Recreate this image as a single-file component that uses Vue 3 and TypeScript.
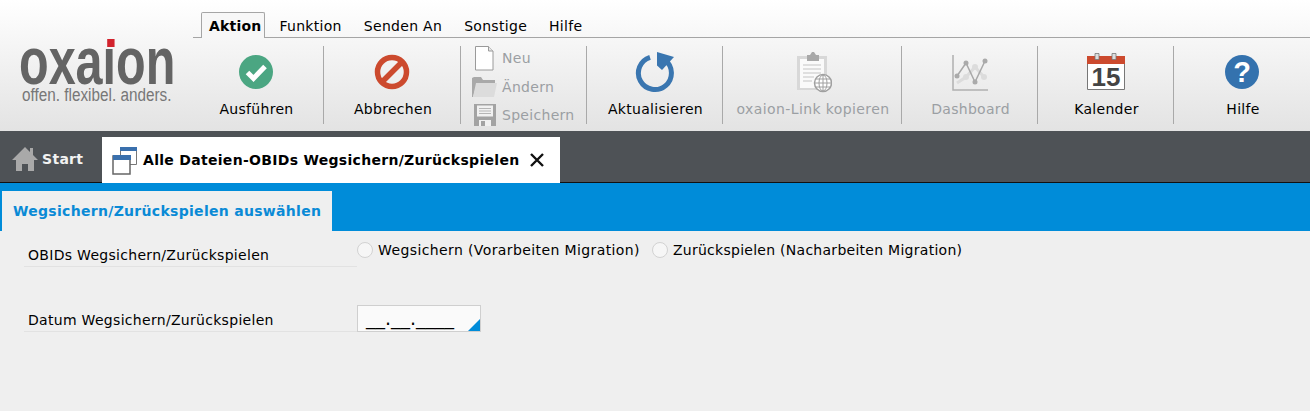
<script setup lang="ts">
const menu: string[] = ['Funktion', 'Senden An', 'Sonstige', 'Hilfe']
</script>

<template>
  <div class="page">
    <header class="head">
      <div class="logo">
        <div class="logo-mark"><span>oxa</span><span class="i-wrap"><span class="i">i</span></span><span>on</span></div>
        <div class="logo-sub">offen. flexibel. anders.</div>
      </div>
      <div class="ribbon">
        <nav class="menu">
          <span class="menu-tab active">Aktion</span>
          <span v-for="m in menu" :key="m" class="menu-tab">{{ m }}</span>
        </nav>
        <div class="tools">
          <div class="tool">
            <svg width="36" height="36" viewBox="0 0 36 36"><circle cx="18" cy="18" r="17" fill="#4ba682"/><path d="M9.500 18.500l6 6L27 12.500" fill="none" stroke="#fff" stroke-width="5"/></svg>
            <span>Ausführen</span>
          </div>
          <div class="tool second">
            <svg width="36" height="36" viewBox="0 0 36 36"><circle cx="18" cy="18" r="14.500" fill="none" stroke="#cc4a2e" stroke-width="5.500"/><path d="M8 28L28 8" stroke="#cc4a2e" stroke-width="5.500"/></svg>
            <span>Abbrechen</span>
          </div>
          <div class="tool small">
            <div class="row">
              <svg width="26" height="26" viewBox="0 0 26 26"><path d="M4.500 1.500h13l4.500 4.500v19H4.500z" fill="#fff" stroke="#9a9a9a"/><path d="M17.500 1.500v4.500h4.500" fill="#e6e6e6" stroke="#9a9a9a"/></svg>
              <span>Neu</span>
            </div>
            <div class="row">
              <svg width="26" height="26" viewBox="0 0 26 26"><path d="M1 4l2-1h7l2 3h12v3H6L2 23H1z" fill="#a9a9a9"/><path d="M5 9h21l-3 14H2z" fill="#dcdcdc"/></svg>
              <span>Ändern</span>
            </div>
            <div class="row">
              <svg width="26" height="26" viewBox="0 0 26 26"><path d="M3 2h22v22H3z" fill="#a3a3a3"/><path d="M6 3.500h16v11H6z" fill="#f1f1f1"/><path d="M8 6.500h12M8 9h12M8 11.500h12" stroke="#b5b5b5"/><path d="M8 18h12v6H8z" fill="#f1f1f1"/><path d="M10 19h4v5h-4z" fill="#a3a3a3"/></svg>
              <span>Speichern</span>
            </div>
          </div>
          <div class="tool">
            <svg class="high" width="42" height="42" viewBox="0 0 42 42"><path d="M16 5.300A16.500 16.500 0 1 0 31 8" fill="none" stroke="#3a76b0" stroke-width="5"/><path d="M23 0l17 5-12 13-5-4.500z" fill="#3a76b0"/></svg>
            <span>Aktualisieren</span>
          </div>
          <div class="tool wide dim">
            <svg class="high" width="40" height="42" viewBox="0 0 40 42"><path d="M5 4h30v34H5z" fill="#d8d8d8"/><path d="M8 7h24v29H8z" fill="#fafafa"/><path d="M15 3h3l2-3h2l2 3h3v6H15z" fill="#a8a8a8"/><path d="M11 13h18M11 17h18M11 21h18M11 25h11M11 29h9" stroke="#c4c4c4"/><circle cx="31" cy="31" r="8.500" fill="#fff" stroke="#a0a0a0" stroke-width="1.500"/><path d="M23 31h16M31 23v16M24 27h14M24 35h14" stroke="#a0a0a0"/><ellipse cx="31" cy="31" rx="4" ry="8" fill="none" stroke="#a0a0a0"/></svg>
            <span class="link-text">oxaion-Link kopieren</span>
          </div>
          <div class="tool dim">
            <svg width="36" height="38" viewBox="0 0 36 38"><path d="M1 1v35h35" fill="none" stroke="#b0b0b0" stroke-width="1.500"/><path d="M5 29l9-6 9-10 9 10" fill="none" stroke="#dcdcdc" stroke-width="3"/><g fill="#dcdcdc"><circle cx="14" cy="23" r="3"/><circle cx="23" cy="13" r="3"/><circle cx="32" cy="23" r="3"/></g><path d="M5 22l9-13 9 19 10-21" fill="none" stroke="#a8a8a8" stroke-width="1.500"/><g fill="#aaa"><circle cx="5" cy="22" r="2.500"/><circle cx="14" cy="9" r="2.500"/><circle cx="23" cy="28" r="2.500"/><circle cx="33" cy="7" r="2.500"/></g></svg>
            <span>Dashboard</span>
          </div>
          <div class="tool">
            <svg class="cal-icon" width="40" height="38" viewBox="0 0 40 38"><path d="M1.500 3.500h37v33h-37z" fill="#fff" stroke="#777"/><path d="M1 3h38v8H1z" fill="#cc4a2e"/><path d="M9 .5h4v6H9zM26 .5h4v6h-4z" fill="#ddd" stroke="#777" stroke-width=".8"/><text x="20" y="33" class="cal">15</text></svg>
            <span>Kalender</span>
          </div>
          <div class="tool last">
            <svg width="36" height="36" viewBox="0 0 36 36"><circle cx="18" cy="18" r="17" fill="#3472ae"/><text x="18" y="28" class="q">?</text></svg>
            <span>Hilfe</span>
          </div>
        </div>
      </div>
    </header>

    <div class="tabs">
      <div class="tab-start">
        <svg width="26" height="26" viewBox="0 0 26 26"><path d="M13 1L0 14h4v11h6v-7h6v7h6V14h4l-5-5V2h-3v4z" fill="#a9a9a9"/></svg>
        <span>Start</span>
      </div>
      <div class="tab-current">
        <svg width="26" height="29" viewBox="0 0 26 29"><path d="M8.500 1.500h16v17h-16z" fill="#fff" stroke="#777"/><path d="M8 1h17v4H8z" fill="#3a70ad"/><path d="M1 10h17v18H1z" fill="#fff" stroke="#666" stroke-width="1.500"/><path d="M1 9h18v5H1z" fill="#3a70ad"/></svg>
        <span>Alle Dateien-OBIDs Wegsichern/Zurückspielen</span>
        <svg class="x" width="16" height="16" viewBox="0 0 16 16"><path d="M2 2l12 12M14 2L2 14" stroke="#111" stroke-width="2.400"/></svg>
      </div>
    </div>

    <div class="band">
      <div class="band-tab">Wegsichern/Zurückspielen auswählen</div>
    </div>

    <main class="form">
      <div class="line one">
        <div class="label">OBIDs Wegsichern/Zurückspielen</div>
        <div class="radios">
          <span class="radio"></span><span class="rtext first">Wegsichern (Vorarbeiten Migration)</span>
          <span class="radio second"></span><span class="rtext">Zurückspielen (Nacharbeiten Migration)</span>
        </div>
      </div>
      <div class="line two">
        <div class="label">Datum Wegsichern/Zurückspielen</div>
        <div class="date"><span>__.__.____</span><i class="corner"></i></div>
      </div>
    </main>
  </div>
</template>

<style>
html, body { margin: 0; background: #efefef; }
</style>

<style scoped>
.page { width: 1310px; height: 411px; overflow: hidden; font: 14px "DejaVu Sans", sans-serif; letter-spacing: .3px; color: #000; background: #efefef; display: flex; flex-direction: column; }
.head { height: 131px; display: flex; background: linear-gradient(#fff, #e3e3e3); flex: none; }
.logo { width: 188px; flex: none; padding: 36px 0 0 19px; box-sizing: border-box; color: #646464; }
.logo-mark { font: bold 66px/50px "Liberation Sans", sans-serif; letter-spacing: 0; height: 50px; display: flex; transform: scaleX(.735); transform-origin: left; width: 230px; }
.i-wrap { position: relative; display: block; }
.i { display: block; clip-path: inset(12px 0 0 0); }
.i-wrap::before { content: ""; position: absolute; left: 6px; top: 3px; width: 10px; height: 8px; background: #d2222c; }
.logo-sub { font: 18px/17px "Liberation Sans", sans-serif; color: #777; margin: 1px 0 0 3px; letter-spacing: 0; white-space: nowrap; transform: scaleX(.85); transform-origin: left; }
.ribbon { flex: 1; min-width: 0; }
.menu { height: 37px; border-bottom: 1px solid #a5a5a5; display: flex; align-items: flex-end; padding-left: 5px; margin-left: 5px; }
.menu-tab { height: 24px; line-height: 27px; padding: 0 11px; white-space: nowrap; }
.menu-tab.active { font-weight: bold; padding: 0 3px 0 7px; margin: 0 3px -1px 3px; background: #f7f7f7; border: 1px solid #a5a5a5; border-bottom: 0; border-radius: 2px 2px 0 0; height: 25px; letter-spacing: .2px; }
.tools { display: flex; padding-top: 8px; height: 78px; }
.tool { width: 136px; height: 78px; flex: none; box-sizing: border-box; border-right: 1px solid #a9a9a9; display: flex; flex-direction: column; align-items: center; justify-content: flex-end; position: relative; }
.tool > svg { position: absolute; top: 8px; left: 50%; transform: translateX(-50%); }
.tool > svg.high { top: 6px; }
.tool > svg.cal-icon { top: 7px; }
.tool > span { line-height: 18px; padding: 0 0 6px 2px; white-space: nowrap; }
.tool > span.link-text { letter-spacing: .4px; }
.tool.second { width: 137px; }
.tool.wide { width: 179px; }
.tool.dim { color: #9b9fa3; }
.tool.last { border-right: 0; }
.tool.small { width: 126px; justify-content: flex-start; align-items: flex-start; color: #9b9fa3; padding-left: 10px; }
.row { height: 28.500px; flex: none; display: flex; align-items: center; gap: 5px; white-space: nowrap; }
.row:first-child { margin-top: -2px; }
.cal { font: bold 26px "Liberation Sans", sans-serif; letter-spacing: 0; fill: #444; text-anchor: middle; }
.q { font: bold 29px "Liberation Sans", sans-serif; letter-spacing: 0; fill: #fff; text-anchor: middle; }
.tabs { height: 52px; flex: none; box-sizing: border-box; background: #4e5256; border-bottom: 1px solid #111; display: flex; align-items: flex-end; }
.tab-start { width: 102px; height: 46px; flex: none; box-sizing: border-box; padding-left: 12px; display: flex; align-items: center; gap: 4px; color: #f2f2f2; font-weight: bold; }
.tab-current { width: 458px; height: 46px; margin-bottom: -1px; flex: none; box-sizing: border-box; background: #fff; padding-left: 10px; display: flex; align-items: center; gap: 5px; font-weight: bold; white-space: nowrap; }
.x { margin-left: 5px; }
.band { height: 48px; flex: none; background: #008cd9; display: flex; align-items: flex-end; padding-left: 2px; }
.band-tab { width: 330px; height: 40px; background: #efefef; color: #0a8ad6; font-weight: bold; line-height: 40px; padding-left: 11px; box-sizing: border-box; white-space: nowrap; }
.form { flex: 1; padding-left: 24px; }
.line { display: flex; }
.label { width: 333px; flex: none; box-sizing: border-box; border-bottom: 1px solid #e2e2e2; padding-left: 4px; white-space: nowrap; }
.one { height: 36px; }
.one .label { height: 36px; line-height: 48px; }
.radios { display: flex; align-items: center; height: 38px; white-space: nowrap; letter-spacing: .27px; }
.rtext.first { letter-spacing: .39px; }
.radio { width: 16px; height: 16px; border-radius: 50%; background: #f6f6f6; border: 1px solid #d2d2d2; box-sizing: border-box; margin-right: 5px; }
.radio.second { margin-left: 12px; }
.two { margin-top: 38px; height: 27px; }
.two .label { height: 27px; line-height: 30px; }
.date { width: 124px; height: 27px; box-sizing: border-box; border: 1px solid #cfcfcf; background: #fafafa; position: relative; padding-left: 8px; font-size: 19px; line-height: 24px; letter-spacing: 0; overflow: hidden; white-space: nowrap; }
.corner { position: absolute; right: 0; bottom: 0; width: 0; height: 0; border-style: solid; border-width: 0 0 12px 12px; border-color: transparent transparent #008cd9 transparent; }
</style>
